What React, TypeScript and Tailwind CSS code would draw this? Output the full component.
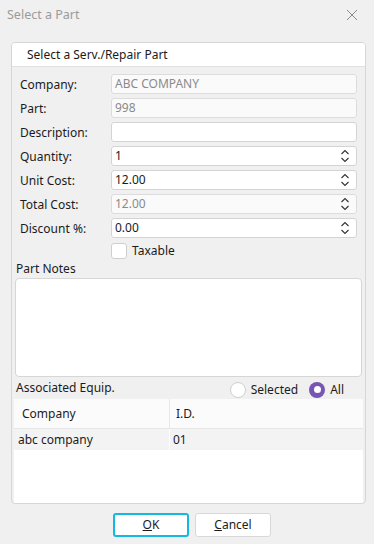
import React from "react";

const FONT = { fontFamily: '"Noto Sans", "Liberation Sans", sans-serif' };

function Spinner() {
  return (
    <svg width="10" height="14" viewBox="0 0 10 14" className="text-[#333]">
      <path d="M1.5 5 L5 1.5 L8.5 5" fill="none" stroke="currentColor" strokeWidth="1.1" />
      <path d="M1.5 9 L5 12.5 L8.5 9" fill="none" stroke="currentColor" strokeWidth="1.1" />
    </svg>
  );
}

interface Row { label: string; value: string; disabled?: boolean; spin?: boolean; }

const ROWS: Row[] = [
  { label: "Company:", value: "ABC COMPANY", disabled: true },
  { label: "Part:", value: "998", disabled: true },
  { label: "Description:", value: "" },
  { label: "Quantity:", value: "1", spin: true },
  { label: "Unit Cost:", value: "12.00", spin: true },
  { label: "Total Cost:", value: "12.00", disabled: true, spin: true },
  { label: "Discount %:", value: "0.00", spin: true },
];

export default function App() {
  return (
    <div className="w-[374px] h-[544px] bg-[#f0f0f0] text-[12px] text-[#1b1b1b] flex flex-col" style={FONT}>
      {/* title bar */}
      <div className="h-[30px] flex items-center justify-between pl-[7px] pr-[16px] shrink-0">
        <span className="text-[#9b9b9b] text-[12.5px]">Select a Part</span>
        <svg width="12" height="12" viewBox="0 0 12 12">
          <path d="M1 1 L11 11 M11 1 L1 11" stroke="#8a8a8a" strokeWidth="1" fill="none" />
        </svg>
      </div>

      <div className="mt-[12px] mx-[11px] w-[355px] h-[462px] border border-[#d6d6d6] rounded-[4px] bg-[#f0f0f0] flex flex-col overflow-hidden">
        <div className="h-[24px] bg-white border-b border-[#e1e1e1] flex items-center pl-[15px] shrink-0">
          Select a Serv./Repair Part
        </div>

        <div className="flex flex-col gap-[4px] pt-[7px] pl-[8px] pr-[8px]">
          {ROWS.map((r) => (
            <div key={r.label} className="flex items-center h-[20px]">
              <span className="w-[91px] shrink-0 mt-[1px]">{r.label}</span>
              <div
                className={`flex-1 h-[20px] rounded-[3px] border flex items-center pl-[3px] pr-[6px] ${
                  r.disabled ? "bg-[#fafafa] border-[#dcdcdc] text-[#8a8a8a]" : "bg-white border-[#d4d4d4] text-[#1b1b1b]"
                }`}
              >
                <span className="flex-1">{r.value}</span>
                {r.spin && <Spinner />}
              </div>
            </div>
          ))}
        </div>

        <div className="flex items-center h-[16px] mt-[5px] pl-[99px]">
          <div className="w-[16px] h-[16px] rounded-[3px] border border-[#cfcfcf] bg-white" />
          <span className="ml-[5px]">Taxable</span>
        </div>

        <div className="h-[19px] flex items-center pl-[4px]">Part Notes</div>
        <div className="mx-[3px] h-[99px] bg-white border border-[#d6d6d6] rounded-[4px]" />

        <div className="h-[22px] flex items-center pl-[4px] pr-[21px]">
          <span className="flex-1">Associated Equip.</span>
          <div className="flex items-center mt-[3px]">
            <div className="w-[16px] h-[16px] rounded-full border border-[#cfcfcf] bg-white" />
            <span className="ml-[5px]">Selected</span>
            <div className="ml-[11px] w-[16px] h-[16px] rounded-full bg-[#7556b3] flex items-center justify-center">
              <div className="w-[7px] h-[7px] rounded-full bg-white" />
            </div>
            <span className="ml-[5px]">All</span>
          </div>
        </div>

        <div className="mx-[2px] flex-1 bg-white flex flex-col">
          <div className="h-[30px] flex bg-[#fbfbfb] border-b border-[#e6e6e6]">
            <div className="w-[156px] border-r border-[#e6e6e6] flex items-center pl-[8px]">Company</div>
            <div className="flex items-center pl-[6px]">I.D.</div>
          </div>
          <div className="h-[21px] flex bg-[#f3f3f3]">
            <div className="w-[156px] border-r border-white flex items-center pl-[4px]">abc company</div>
            <div className="flex items-center pl-[3px]">01</div>
          </div>
        </div>
      </div>

      <div className="flex justify-center gap-[6px] mt-[9px] pl-[10px]">
        <button className="w-[76px] h-[24px] bg-white border-2 border-[#14b9df] rounded-[3px] flex items-center justify-center">
          <span><span className="underline">O</span>K</span>
        </button>
        <button className="w-[76px] h-[24px] bg-white border border-[#d8d8d8] rounded-[3px] flex items-center justify-center">
          <span><span className="underline">C</span>ancel</span>
        </button>
      </div>
    </div>
  );
}
